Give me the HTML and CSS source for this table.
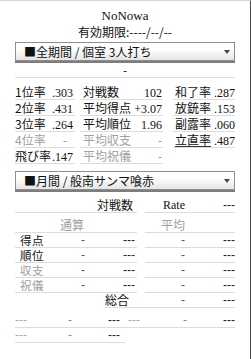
FILE: index.html
```html
<!DOCTYPE html>
<html lang="ja">
<head>
<meta charset="utf-8">
<title>NoNowa</title>
<link rel="stylesheet" href="styles.css">
</head>
<body>
<div class="page">
  <div class="title">NoNowa</div>
  <div class="expiry">有効期限:----/--/--</div>
  <div class="select"><span>■全期間 / 個室 3人打ち</span><span class="arrow"></span></div>
  <div class="rule"></div>
  <div class="dashrow">-</div>
  <div class="stats">
    <div class="row">
      <div class="cell c1"><span>1位率</span><span class="num">.303</span></div>
      <div class="cell c2"><span>対戦数</span><span class="num">102</span></div>
      <div class="cell c3"><span>和了率</span><span class="num">.287</span></div>
    </div>
    <div class="row">
      <div class="cell c1"><span>2位率</span><span class="num">.431</span></div>
      <div class="cell c2"><span>平均得点</span><span class="num">+3.07</span></div>
      <div class="cell c3"><span>放銃率</span><span class="num">.153</span></div>
    </div>
    <div class="row">
      <div class="cell c1"><span>3位率</span><span class="num">.264</span></div>
      <div class="cell c2"><span>平均順位</span><span class="num">1.96</span></div>
      <div class="cell c3"><span>副露率</span><span class="num">.060</span></div>
    </div>
    <div class="row">
      <div class="cell c1 muted"><span>4位率</span><span class="num dash1">-</span></div>
      <div class="cell c2 muted"><span>平均収支</span><span class="num">-</span></div>
      <div class="cell c3"><span class="link">立直率</span><span class="num">.487</span></div>
    </div>
    <div class="row">
      <div class="cell c1"><span>飛び率</span><span class="num">.147</span></div>
      <div class="cell c2 muted"><span>平均祝儀</span><span class="num">-</span></div>
      <div class="cell c3 empty"></div>
    </div>
  </div>
  <div class="select second"><span>■月間 / 般南サンマ喰赤</span><span class="arrow"></span></div>
  <div class="rule"></div>
  <div class="monthly">
    <div class="mrow head">
      <div class="grp left"><span class="span-all">対戦数</span></div>
      <div class="grp right"><span class="rv serif">Rate</span><span class="dd">---</span></div>
    </div>
    <div class="mrow sub">
      <div class="grp left"><span class="span-all tsum">通算</span></div>
      <div class="grp right"><span class="rv gray">平均</span><span></span></div>
    </div>
    <div class="mrow">
      <div class="grp left"><span class="lb">得点</span><span class="v1">-</span><span class="dd">---</span></div>
      <div class="grp right"><span class="rv v2">-</span><span class="dd">---</span></div>
    </div>
    <div class="mrow">
      <div class="grp left"><span class="lb">順位</span><span class="v1">-</span><span class="dd">---</span></div>
      <div class="grp right"><span class="rv v2">-</span><span class="dd">---</span></div>
    </div>
    <div class="mrow">
      <div class="grp left"><span class="lb gray">収支</span><span class="v1">-</span><span class="dd">---</span></div>
      <div class="grp right"><span class="rv v2">-</span><span class="dd">---</span></div>
    </div>
    <div class="mrow">
      <div class="grp left"><span class="lb gray">祝儀</span><span class="v1">-</span><span class="dd">---</span></div>
      <div class="grp right"><span class="rv v2">-</span><span class="dd">---</span></div>
    </div>
    <div class="total">
      <span class="tl">総合</span>
      <div class="tgrid"><span class="rv v2">-</span><span class="dd">---</span></div>
    </div>
    <div class="brow first">
      <div class="half h1"><span class="bl">---</span><span class="bm">-</span><span class="br">---</span></div>
      <div class="half h2"><span class="bl">---</span><span class="bm">-</span><span class="br">---</span></div>
    </div>
    <div class="brow">
      <div class="half h1"><span class="bl">---</span><span class="bm">-</span><span class="br">---</span></div>
    </div>
  </div>
</div>
</body>
</html>
```

FILE: styles.css
```css
* { box-sizing: border-box; margin: 0; padding: 0; }
html, body { background: #fff; }
body {
  margin: 0;
  font-family: "Noto Sans CJK JP", "Noto Sans", sans-serif;
  font-size: 12px;
  color: #111;
}
.page {
  width: 251px;
  height: 359px;
  border-top: 1px solid #d6d6d6;
  border-right: 1px solid #4a4a4a;
  padding: 0 15px;
}
.title {
  margin-top: 7px;
  font-family: "Liberation Serif", serif;
  font-size: 13px;
  line-height: 16px;
  text-align: center;
}
.expiry {
  font-size: 12px;
  line-height: 16px;
  text-align: center;
}
.select {
  margin-top: 2px;
  height: 19px;
  border: 1px solid #8e8e8e;
  background: linear-gradient(#ffffff 35%, #e4e4e4);
  display: flex;
  align-items: center;
  padding: 0 4px 0 8px;
  line-height: 17px;
  font-size: 12px;
}
.select.second { margin-top: 7px; }
.arrow {
  margin-left: auto;
  width: 0;
  height: 0;
  border-left: 3px solid transparent;
  border-right: 3px solid transparent;
  border-top: 4px solid #444;
}
.rule { height: 2px; background: #7d7d7d; }
.dashrow {
  text-align: center;
  line-height: 14px;
  border-bottom: 1px solid #dcdcdc;
}
.stats { margin-top: 6px; }
.row { display: flex; height: 16px; }
.cell {
  display: flex;
  justify-content: space-between;
  align-items: baseline;
  height: 16px;
  line-height: 15px;
  border-bottom: 1px solid #dcdcdc;
  white-space: nowrap;
}
.c1 { width: 60px; padding-right: 2px; }
.c2 { width: 83px; margin-left: 5px; padding-left: 3px; padding-right: 1px; }
.c3 { width: 62px; margin-left: 10px; padding-left: 2px; }
.empty { border-bottom: none; }
.num { font-family: "Liberation Serif", serif; font-size: 12px; }
.dash1 { padding-right: 6px; }
.muted { color: #a0a0a0; }
.link { text-decoration: underline; text-decoration-color: #333; }

.mrow { display: flex; line-height: 14px; }
.grp { display: grid; border-bottom: 1px solid #dcdcdc; }
.left { width: 122px; grid-template-columns: 58px 20px 1fr; }
.right { width: 90px; margin-left: 8px; grid-template-columns: 50px 40px; }
.head .grp { padding-top: 6px; }
.sub .grp { padding-top: 5px; }
.span-all { grid-column: 1 / -1; text-align: right; padding-right: 4px; }
.tsum { text-align: left; padding-left: 45px; color: #a0a0a0; }
.serif { font-family: "Liberation Serif", serif; }
.gray { color: #a0a0a0; }
.rv { text-align: right; padding-right: 10px; }
.dd { text-align: right; font-family: "Liberation Sans", sans-serif; color: #222; }
.left .dd { padding-right: 2px; }
.lb { padding-left: 5px; font-size: 11.5px; letter-spacing: 0.5px; }
.v1 { text-align: center; font-family: "Liberation Sans", sans-serif; color: #555; }
.v2 { font-family: "Liberation Sans", sans-serif; color: #555; }

.total {
  margin-left: 90px;
  display: flex;
  line-height: 14px;
  border-bottom: 1px solid #dcdcdc;
}
.tl { width: 40px; }
.tgrid { display: grid; grid-template-columns: 50px 40px; }

.brow { display: flex; line-height: 14px; }
.brow.first { margin-top: 5px; }
.half {
  width: 110px;
  display: grid;
  grid-template-columns: 1fr 1fr 1fr;
  border-bottom: 1px solid #dcdcdc;
  font-family: "Liberation Sans", sans-serif;
}
.bl { color: #a8a8a8; }
.bm { text-align: center; color: #888; }
.br { text-align: right; color: #222; }
.h1 .br { padding-right: 5px; }
.h2 .bl { padding-left: 3px; }
.h2 .bm { padding-left: 10px; }
```
